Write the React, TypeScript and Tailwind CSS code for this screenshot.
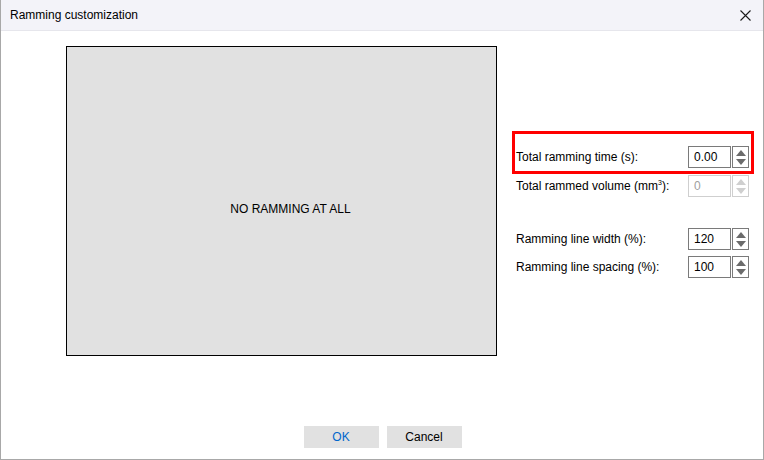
import React from 'react';

interface SpinProps {
  value: string;
  disabled?: boolean;
}

const Spin: React.FC<SpinProps> = ({ value, disabled }) => {
  const border = disabled ? 'border-[#cfcfcf]' : 'border-[#7a7a7a]';
  const arrow = disabled ? '#cfcfcf' : '#6b6b6b';
  return (
    <div className="flex h-[22px]">
      <div className={`w-[43px] h-full border ${border} bg-white pl-[5px] flex items-center text-[12px] ${disabled ? 'text-[#a0a0a0]' : 'text-black'}`}>
        {value}
      </div>
      <div className={`ml-[1px] w-[17px] h-full border ${border} bg-white flex flex-col items-center justify-center gap-[3px]`}>
        <svg width="10" height="6" viewBox="0 0 10 6"><path d="M0 6 L5 0 L10 6 Z" fill={arrow} /></svg>
        <svg width="10" height="6" viewBox="0 0 10 6"><path d="M0 0 L5 6 L10 0 Z" fill={arrow} /></svg>
      </div>
    </div>
  );
};

const Row: React.FC<{ label: React.ReactNode; value: string; disabled?: boolean }> = ({ label, value, disabled }) => (
  <div className="flex items-center justify-between h-[22px]">
    <span className="text-[12px] text-black">{label}</span>
    <Spin value={value} disabled={disabled} />
  </div>
);

const App: React.FC = () => {
  return (
    <div
      className="w-[764px] h-[460px] flex flex-col bg-white border-l border-r border-b border-[#a8a8a8] overflow-hidden"
      style={{ fontFamily: '"Liberation Sans", Arial, sans-serif' }}
    >
      <div className="h-[31px] shrink-0 bg-[#f3f3f9] border-b border-[#e6e6ec] flex items-center justify-between pl-[9px] pr-[12px]">
        <span className="text-[12px] text-black">Ramming customization</span>
        <svg width="11" height="11" viewBox="0 0 11 11">
          <path d="M0.5 0.5 L10.5 10.5 M10.5 0.5 L0.5 10.5" stroke="#1a1a1a" strokeWidth="1.1" />
        </svg>
      </div>

      <div className="flex flex-1">
        <div className="ml-[65px] mt-[15px] w-[431px] h-[310px] shrink-0 border-[1.5px] border-black bg-[#e1e1e1] flex items-center justify-center pl-[18px] pt-[16px]">
          <span className="text-[12px] text-black">NO RAMMING AT ALL</span>
        </div>

        <div className="ml-[19px] mt-[115px] w-[233px] flex flex-col">
          <div className="relative">
            <Row label="Total ramming time (s):" value="0.00" />
            <div className="absolute left-[-4px] right-[-5px] top-[-15px] bottom-[-6px] border-[3px] border-[#ff0000] pointer-events-none" />
          </div>
          <div className="mt-[7px]">
            <Row
              label={<>Total rammed volume (mm<sup className="text-[7px] top-[-5px]">3</sup>):</>}
              value="0"
              disabled
            />
          </div>
          <div className="mt-[31px] flex flex-col gap-[6px]">
            <Row label="Ramming line width (%):" value="120" />
            <Row label="Ramming line spacing (%):" value="100" />
          </div>
        </div>
      </div>

      <div className="h-[33px] shrink-0 flex justify-center gap-[8px] pl-[1px]">
        <button className="w-[75px] h-[22px] bg-[#e1e1e1] text-[12px] text-[#0066cc]">OK</button>
        <button className="w-[75px] h-[22px] bg-[#e1e1e1] text-[12px] text-black">Cancel</button>
      </div>
    </div>
  );
};

export default App;
